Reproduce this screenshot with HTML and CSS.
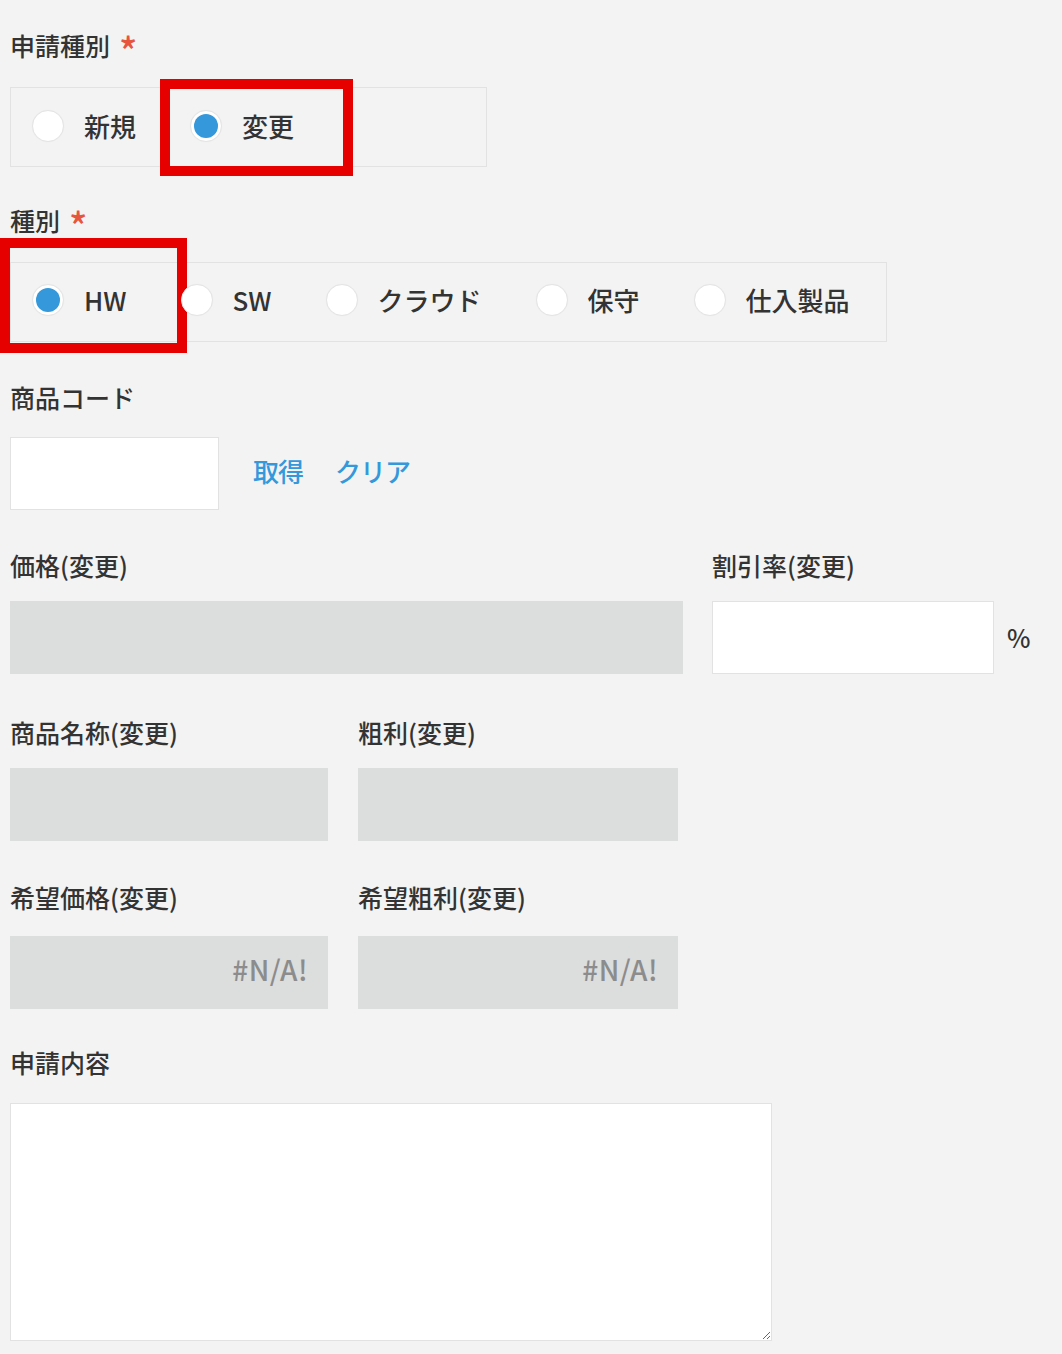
FILE: index.html
```html
<!DOCTYPE html>
<html lang="ja">
<head>
<meta charset="utf-8">
<title>申請フォーム</title>
<link rel="stylesheet" href="styles.css">
</head>
<body>
<div class="form">
  <div class="field row1">
    <div class="label">申請種別<span class="req">*</span></div>
    <div class="radio-group group-narrow">
      <label class="radio-item"><span class="circle"></span><span class="rtext">新規</span></label>
      <label class="radio-item"><span class="circle checked"></span><span class="rtext">変更</span><span class="highlight hl-1"></span></label>
    </div>
  </div>

  <div class="field row2">
    <div class="label">種別<span class="req">*</span></div>
    <div class="radio-group">
      <label class="radio-item"><span class="circle checked"></span><span class="rtext">HW</span><span class="highlight hl-2"></span></label>
      <label class="radio-item"><span class="circle"></span><span class="rtext">SW</span></label>
      <label class="radio-item"><span class="circle"></span><span class="rtext">クラウド</span></label>
      <label class="radio-item"><span class="circle"></span><span class="rtext">保守</span></label>
      <label class="radio-item"><span class="circle"></span><span class="rtext">仕入製品</span></label>
    </div>
  </div>

  <div class="field row3">
    <div class="label">商品コード</div>
    <div class="code-line">
      <div class="input code-input"></div>
      <a class="link">取得</a>
      <a class="link">クリア</a>
    </div>
  </div>

  <div class="cols row4">
    <div class="field col-price">
      <div class="label">価格(変更)</div>
      <div class="readonly wide"></div>
    </div>
    <div class="field col-rate">
      <div class="label">割引率(変更)</div>
      <div class="rate-line">
        <div class="input rate-input"></div>
        <span class="unit">%</span>
      </div>
    </div>
  </div>

  <div class="cols row5">
    <div class="field col-a">
      <div class="label">商品名称(変更)</div>
      <div class="readonly"></div>
    </div>
    <div class="field col-b">
      <div class="label">粗利(変更)</div>
      <div class="readonly"></div>
    </div>
  </div>

  <div class="cols row6">
    <div class="field col-a">
      <div class="label">希望価格(変更)</div>
      <div class="readonly na">#N/A!</div>
    </div>
    <div class="field col-b">
      <div class="label">希望粗利(変更)</div>
      <div class="readonly na">#N/A!</div>
    </div>
  </div>

  <div class="field row7">
    <div class="label">申請内容</div>
    <textarea class="textarea"></textarea>
  </div>
</div>
</body>
</html>
```

FILE: styles.css
```css
html, body {
  margin: 0;
  padding: 0;
  background: #f3f3f3;
}

body {
  font-family: "Noto Sans CJK JP", "Noto Sans", sans-serif;
  font-weight: 500;
  color: #333333;
  font-size: 25px;
}

.form {
  padding: 31px 0 0 10px;
  display: flex;
  flex-direction: column;
}

.field {
  display: flex;
  flex-direction: column;
}

.label {
  height: 32px;
  line-height: 28px;
  font-size: 25px;
  color: #333;
  white-space: nowrap;
}

.req {
  color: #e8553f;
  font-size: 38px;
  line-height: 0;
  margin-left: 9px;
  vertical-align: -10px;
}

/* radio groups */
.radio-group {
  margin-top: 24px;
  height: 73px;
  padding-bottom: 5px;
  border: 1px solid #e2e2e2;
  display: flex;
  align-items: stretch;
  padding-left: 21px;
  align-self: flex-start;
  box-sizing: content-box;
}

.group-narrow {
  width: 454px;
  height: 75px;
  padding-bottom: 3px;
}

.radio-item {
  position: relative;
  display: flex;
  align-items: center;
  margin-right: 54px;
}

.radio-item:last-child {
  margin-right: 36px;
}

.circle {
  width: 30px;
  height: 30px;
  border-radius: 50%;
  background: #ffffff;
  border: 1px solid #e4e4e4;
  box-shadow: 0 0 1px rgba(0, 0, 0, 0.05);
  margin-right: 20px;
  position: relative;
  flex: none;
}

.circle.checked::after {
  content: "";
  position: absolute;
  left: 3px;
  top: 3px;
  width: 24px;
  height: 24px;
  border-radius: 50%;
  background: #3498db;
}

.rtext {
  font-size: 26px;
  white-space: nowrap;
}

.highlight {
  position: absolute;
  border: 10px solid #e60000;
  box-sizing: border-box;
  pointer-events: none;
}

.hl-1 {
  left: -30px;
  right: -59px;
  top: -9px;
  bottom: -13px;
}

.hl-2 {
  left: -32px;
  right: -60px;
  top: -25px;
  bottom: -17px;
}

.row2 {
  margin-top: 39px;
}

.row3 {
  margin-top: 41px;
}

.code-line {
  margin-top: 22px;
  display: flex;
  align-items: center;
}

.input {
  background: #ffffff;
  border: 1px solid #e2e2e2;
  box-sizing: border-box;
}

.code-input {
  width: 209px;
  height: 73px;
  margin-right: 34px;
}

.link {
  color: #3498db;
  font-size: 26px;
  letter-spacing: -1px;
  margin-right: 32px;
  margin-bottom: 6px;
  cursor: pointer;
}

.cols {
  display: flex;
  align-items: flex-start;
}

.row4 {
  margin-top: 41px;
}

.col-price {
  width: 673px;
  margin-right: 29px;
}

.readonly {
  margin-top: 18px;
  height: 73px;
  background: #dcdddd;
  box-sizing: border-box;
  display: flex;
  align-items: center;
  justify-content: flex-end;
  padding-right: 20px;
}

.rate-line {
  margin-top: 18px;
  display: flex;
  align-items: center;
}

.rate-input {
  width: 282px;
  height: 73px;
  margin-right: 13px;
}

.unit {
  font-size: 25px;
  color: #333;
  margin-bottom: 2px;
}

.row5 {
  margin-top: 44px;
}

.col-a {
  width: 318px;
  margin-right: 30px;
}

.col-b {
  width: 320px;
}

.row6 {
  margin-top: 42px;
}

.row6 .readonly {
  margin-top: 21px;
}

.na {
  color: #8c8c8c;
  font-size: 28px;
  letter-spacing: 0.5px;
  padding-bottom: 7px;
}

.row7 {
  margin-top: 39px;
}

.textarea {
  margin-top: 23px;
  width: 762px;
  height: 238px;
  background: #ffffff;
  border: 1px solid #e2e2e2;
  box-sizing: border-box;
  padding: 0;
  font-family: inherit;
  font-size: 20px;
  resize: both;
  outline: none;
}
```
